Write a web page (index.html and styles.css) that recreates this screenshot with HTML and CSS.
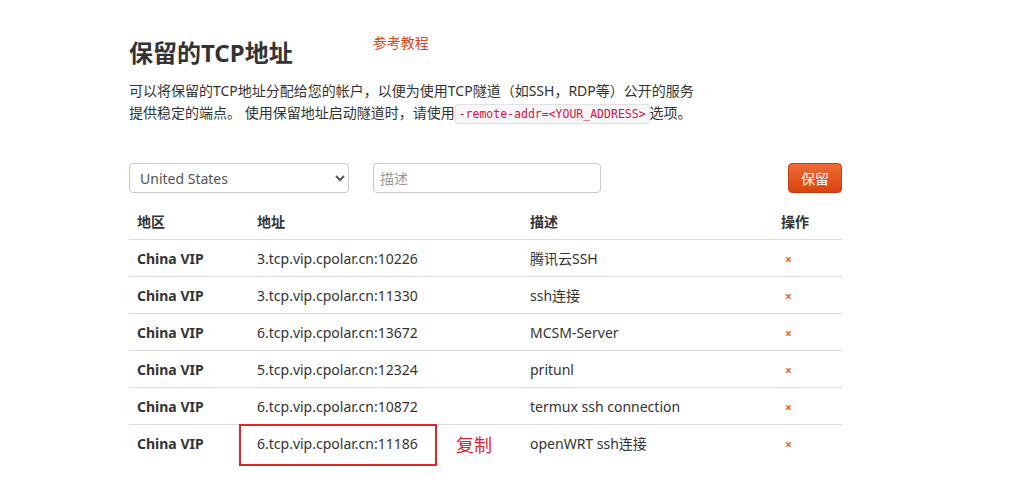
FILE: index.html
```html
<!DOCTYPE html>
<html lang="zh-CN">
<head>
    <meta charset="UTF-8">
    <title>保留的TCP地址</title>
    <link rel="stylesheet" href="styles.css">
</head>
<body>
    <div class="container">
        <div class="title-row">
            <h2>保留的TCP地址</h2>
            <a class="guide" href="#">参考教程</a>
        </div>
        <p class="intro">可以将保留的TCP地址分配给您的帐户，以便为使用TCP隧道（如SSH，RDP等）公开的服务<br>提供稳定的端点。 使用保留地址启动隧道时，请使用<code>-remote-addr=&lt;YOUR_ADDRESS&gt;</code>选项。</p>

        <form class="reserve-form">
            <select class="region">
                <option>United States</option>
            </select>
            <input type="text" class="desc" placeholder="描述">
            <button type="button" class="btn-reserve">保留</button>
        </form>

        <table class="addr-table">
            <thead>
                <tr>
                    <th class="c-region">地区</th>
                    <th class="c-addr">地址</th>
                    <th class="c-desc">描述</th>
                    <th class="c-op">操作</th>
                </tr>
            </thead>
            <tbody>
                <tr>
                    <td class="region-name">China VIP</td>
                    <td>3.tcp.vip.cpolar.cn:10226</td>
                    <td>腾讯云SSH</td>
                    <td><span class="del">×</span></td>
                </tr>
                <tr>
                    <td class="region-name">China VIP</td>
                    <td>3.tcp.vip.cpolar.cn:11330</td>
                    <td>ssh连接</td>
                    <td><span class="del">×</span></td>
                </tr>
                <tr>
                    <td class="region-name">China VIP</td>
                    <td>6.tcp.vip.cpolar.cn:13672</td>
                    <td>MCSM-Server</td>
                    <td><span class="del">×</span></td>
                </tr>
                <tr>
                    <td class="region-name">China VIP</td>
                    <td>5.tcp.vip.cpolar.cn:12324</td>
                    <td>pritunl</td>
                    <td><span class="del">×</span></td>
                </tr>
                <tr>
                    <td class="region-name">China VIP</td>
                    <td>6.tcp.vip.cpolar.cn:10872</td>
                    <td>termux ssh connection</td>
                    <td><span class="del">×</span></td>
                </tr>
                <tr>
                    <td class="region-name">China VIP</td>
                    <td class="highlight-cell">6.tcp.vip.cpolar.cn:11186<span class="mark-box"></span><span class="copy-note">复制</span></td>
                    <td>openWRT ssh连接</td>
                    <td><span class="del">×</span></td>
                </tr>
            </tbody>
        </table>
    </div>
</body>
</html>
```

FILE: styles.css
```css
body {
    margin: 0;
    background-color: #fff;
    font-family: "Noto Sans", "Noto Sans CJK SC", sans-serif;
    font-size: 14px;
    color: #333;
}

.container {
    width: 713px;
    padding: 36px 0 40px 129px;
}

.title-row {
    display: flex;
    align-items: flex-start;
}

h2 {
    margin: 0;
    font-size: 24px;
    line-height: 34px;
    font-weight: bold;
    color: #333;
}

.guide {
    margin-left: 80px;
    margin-top: -4px;
    font-size: 14px;
    color: #dd4814;
    text-decoration: none;
}

.intro {
    margin: 10px 0 0;
    font-size: 14px;
    line-height: 22px;
    color: #333;
}

code {
    font-family: "DejaVu Sans Mono", monospace;
    font-size: 11.5px;
    color: #dd1144;
    background-color: #f7f7f9;
    border: 1px solid #e1e1e8;
    border-radius: 3px;
    padding: 2px 3px;
}

.reserve-form {
    display: flex;
    align-items: center;
    margin-top: 38px;
}

.region {
    width: 220px;
    height: 30px;
    padding: 0 6px;
    border: 1px solid #ccc;
    border-radius: 4px;
    background-color: #fff;
    font-family: inherit;
    font-size: 14px;
    color: #555;
}

.desc {
    width: 228px;
    height: 30px;
    margin-left: 24px;
    padding: 4px 6px;
    box-sizing: border-box;
    border: 1px solid #ccc;
    border-radius: 4px;
    font-family: inherit;
    font-size: 14px;
}

.desc::placeholder {
    color: #999;
}

.btn-reserve {
    margin-left: auto;
    width: 54px;
    height: 30px;
    border: 1px solid #c43c0f;
    border-radius: 4px;
    background: linear-gradient(#f06b35, #d9430f);
    color: #fff;
    font-family: inherit;
    font-size: 14px;
}

.addr-table {
    width: 713px;
    margin-top: 9px;
    border-collapse: collapse;
}

.addr-table th,
.addr-table td {
    text-align: left;
    padding: 0 8px;
    height: 36px;
}

.addr-table th {
    font-weight: bold;
    height: 37px;
}

.addr-table td {
    border-top: 1px solid #ddd;
}

.c-region { width: 104px; }
.c-addr { width: 257px; }
.c-desc { width: 235px; }

.region-name {
    font-weight: bold;
}

.del {
    margin-left: 4px;
    font-size: 12px;
    font-weight: bold;
    color: #ec5f2a;
}

.highlight-cell {
    position: relative;
}

.mark-box {
    position: absolute;
    left: -10px;
    top: -1px;
    width: 194px;
    height: 38px;
    border: 2px solid #e0262c;
}

.copy-note {
    position: absolute;
    left: 207px;
    top: 6px;
    font-size: 18px;
    color: #e0262c;
}
```
